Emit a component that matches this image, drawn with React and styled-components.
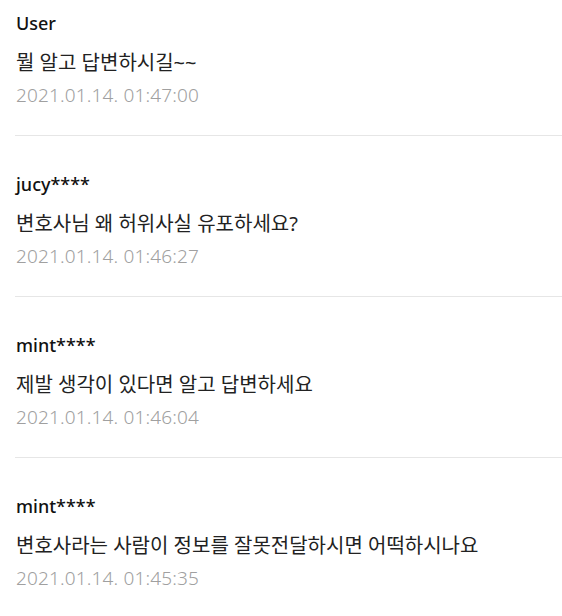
import styled, { createGlobalStyle } from "styled-components";

const GlobalStyle = createGlobalStyle`
  body {
    margin: 0;
    background: #ffffff;
    font-family: "Noto Sans", "Noto Sans CJK KR", sans-serif;
  }
`;

const CommentList = styled.div`
  padding-left: 15px;
`;

const CommentItem = styled.div`
  padding-top: ${(p) => (p.first ? "11px" : "36px")};
  padding-bottom: 26px;
  border-bottom: 1px solid #e6e6e6;
`;

const Nick = styled.div`
  font-size: 18px;
  line-height: 24px;
  font-weight: 500;
  color: #111111;
  padding-left: 1px;
`;

const Body = styled.div`
  margin-top: 14px;
  font-size: 20px;
  line-height: 28px;
  color: #222222;
  padding-left: 1px;
`;

const Date = styled.div`
  margin-top: 4px;
  font-size: 19px;
  line-height: 28px;
  letter-spacing: 0.15px;
  font-weight: 300;
  color: #a0a0a0;
  padding-left: 1px;
`;

const comments = [
  { nick: "User", text: "뭘 알고 답변하시길~~", date: "2021.01.14. 01:47:00" },
  { nick: "jucy****", text: "변호사님 왜 허위사실 유포하세요?", date: "2021.01.14. 01:46:27" },
  { nick: "mint****", text: "제발 생각이 있다면 알고 답변하세요", date: "2021.01.14. 01:46:04" },
  { nick: "mint****", text: "변호사라는 사람이 정보를 잘못전달하시면 어떡하시나요", date: "2021.01.14. 01:45:35" },
];

function App() {
  return (
    <>
      <GlobalStyle />
      <CommentList>
        {comments.map((c, i) => (
          <CommentItem key={i} first={i === 0}>
            <Nick>{c.nick}</Nick>
            <Body>{c.text}</Body>
            <Date>{c.date}</Date>
          </CommentItem>
        ))}
      </CommentList>
    </>
  );
}

export default App;
